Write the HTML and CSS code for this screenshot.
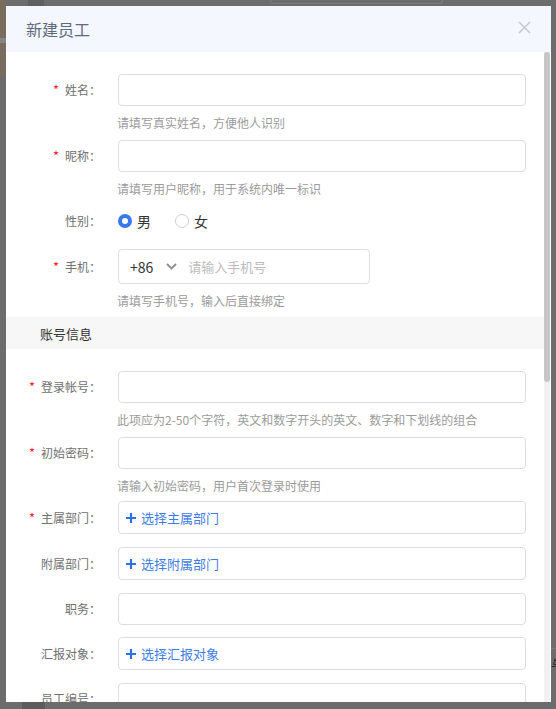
FILE: index.html
```html
<!DOCTYPE html>
<html lang="zh-CN">
<head>
<meta charset="utf-8">
<title>新建员工</title>
<link rel="stylesheet" href="styles.css">
</head>
<body>
<div class="backdrop">
  <div class="bg-strip"></div>
  <div class="bg-block-top"></div>
  <div class="bg-input-top"></div>
  <div class="bg-block-bottom"></div>
  <div class="bg-line-right"></div>
  <div class="bg-char-right">与</div>
</div>

<div class="modal">
  <div class="modal-header">
    <span class="modal-title">新建员工</span>
    <span class="modal-close">
      <svg width="13" height="13" viewBox="0 0 13 13"><path d="M1 1 L12 12 M12 1 L1 12" stroke="#c6c9ce" stroke-width="1.6" fill="none"/></svg>
    </span>
  </div>
  <div class="modal-body">
    <div class="content">
      <div class="item with-help">
        <label class="label"><span class="req">*</span>姓名：</label>
        <div class="ctrl">
          <div class="input"></div>
          <div class="help">请填写真实姓名，方便他人识别</div>
        </div>
      </div>
      <div class="item with-help mb7">
        <label class="label"><span class="req">*</span>昵称：</label>
        <div class="ctrl">
          <div class="input"></div>
          <div class="help">请填写用户昵称，用于系统内唯一标识</div>
        </div>
      </div>
      <div class="item">
        <label class="label">性别：</label>
        <div class="ctrl radio-row">
          <span class="radio"><span class="dot checked"></span>男</span>
          <span class="radio"><span class="dot"></span>女</span>
        </div>
      </div>
      <div class="item with-help mb7">
        <label class="label tall"><span class="req">*</span>手机：</label>
        <div class="ctrl">
          <div class="input phone">
            <span class="code">+86</span>
            <svg class="chev" width="11" height="7" viewBox="0 0 11 7"><path d="M1 1 L5.5 5.5 L10 1" stroke="#8c8c8c" stroke-width="1.8" fill="none"/></svg>
            <span class="placeholder">请输入手机号</span>
          </div>
          <div class="help">请填写手机号，输入后直接绑定</div>
        </div>
      </div>

      <div class="section">账号信息</div>

      <div class="item with-help">
        <label class="label"><span class="req">*</span>登录帐号：</label>
        <div class="ctrl">
          <div class="input"></div>
          <div class="help">此项应为2-50个字符，英文和数字开头的英文、数字和下划线的组合</div>
        </div>
      </div>
      <div class="item with-help mb6">
        <label class="label"><span class="req">*</span>初始密码：</label>
        <div class="ctrl">
          <div class="input"></div>
          <div class="help">请输入初始密码，用户首次登录时使用</div>
        </div>
      </div>
      <div class="item pick-item">
        <label class="label pick-label"><span class="req">*</span>主属部门：</label>
        <div class="ctrl">
          <div class="input picker">
            <svg class="plus" width="10" height="10" viewBox="0 0 10 10"><path d="M5 0 V10 M0 5 H10" stroke="#2f6fe4" stroke-width="2.2" fill="none"/></svg>选择主属部门
          </div>
        </div>
      </div>
      <div class="item pick-item">
        <label class="label pick-label">附属部门：</label>
        <div class="ctrl">
          <div class="input picker">
            <svg class="plus" width="10" height="10" viewBox="0 0 10 10"><path d="M5 0 V10 M0 5 H10" stroke="#2f6fe4" stroke-width="2.2" fill="none"/></svg>选择附属部门
          </div>
        </div>
      </div>
      <div class="item">
        <label class="label">职务：</label>
        <div class="ctrl">
          <div class="input"></div>
        </div>
      </div>
      <div class="item pick-item">
        <label class="label pick-label">汇报对象：</label>
        <div class="ctrl">
          <div class="input picker">
            <svg class="plus" width="10" height="10" viewBox="0 0 10 10"><path d="M5 0 V10 M0 5 H10" stroke="#2f6fe4" stroke-width="2.2" fill="none"/></svg>选择汇报对象
          </div>
        </div>
      </div>
      <div class="item">
        <label class="label">员工编号：</label>
        <div class="ctrl">
          <div class="input"></div>
        </div>
      </div>
      <div class="item">
        <label class="label">入职日期：</label>
        <div class="ctrl">
          <div class="input"></div>
        </div>
      </div>
    </div>
    <div class="scrollbar">
      <div class="track"><div class="thumb"></div></div>
    </div>
  </div>
</div>
</body>
</html>
```

FILE: styles.css
```css
html, body {
  margin: 0;
}
body {
  width: 556px;
  height: 709px;
  box-sizing: border-box;
  padding: 6px 0 0 6px;
  background: #6c6c6c;
  overflow: hidden;
  position: relative;
  font-family: "Noto Sans CJK SC", "Noto Sans", sans-serif;
}

/* dimmed page behind the dialog */
.backdrop {
  position: absolute;
  inset: 0;
  z-index: 0;
}
.bg-strip {
  position: absolute;
  left: 0;
  top: 0;
  width: 6px;
  height: 76px;
  background: #786c5f;
  border-top: 38px solid #7a6c5c;
  box-sizing: border-box;
}
.bg-strip::after {
  content: "";
  position: absolute;
  left: 0;
  top: 0;
  width: 6px;
  height: 5px;
  background: #858585;
}
.bg-block-top {
  position: absolute;
  left: 28px;
  top: 0;
  width: 16px;
  height: 6px;
  background: #5f5f5f;
}
.bg-input-top {
  position: absolute;
  left: 270px;
  top: -4px;
  width: 171px;
  height: 6px;
  border: 1px solid #7e7e7e;
  border-radius: 3px;
}
.bg-block-bottom {
  position: absolute;
  left: 22px;
  top: 702px;
  width: 23px;
  height: 7px;
  background: #5c5c5c;
}
.bg-line-right {
  position: absolute;
  left: 551px;
  top: 648px;
  width: 5px;
  height: 1px;
  background: #7a7a7a;
}
.bg-char-right {
  position: absolute;
  left: 551px;
  top: 656px;
  font-size: 13px;
  line-height: 16px;
  color: #2a2a2a;
}

.modal {
  position: relative;
  z-index: 1;
  width: 545px;
  height: 696px;
  background: #fff;
  display: flex;
  flex-direction: column;
  overflow: hidden;
}
.modal-header {
  flex: none;
  height: 46px;
  background: #f4f7fe;
  display: flex;
  align-items: center;
  justify-content: space-between;
  padding: 0 20px;
}
.modal-title {
  font-size: 16px;
  color: #5f6a7e;
  margin-top: -1px;
}
.modal-close {
  display: flex;
  margin-top: -4px;
}

.modal-body {
  flex: 1;
  min-height: 0;
  display: flex;
}
.content {
  flex: 1;
  min-width: 0;
  overflow: hidden;
  padding-top: 22px;
}
.scrollbar {
  flex: none;
  width: 7px;
  padding-right: 1px;
  box-sizing: border-box;
}
.track {
  height: 100%;
  background: #f1f1f1;
}
.thumb {
  height: 330px;
  background: #c6c6c6;
  border-radius: 3px;
}

.item {
  display: flex;
  margin-bottom: 12px;
  padding-right: 18px;
}
.item.with-help {
  margin-bottom: 8px;
}
.item.mb7 {
  margin-bottom: 7px;
}
.item.mb6 {
  margin-bottom: 6px;
}
.item.pick-item {
  margin-bottom: 13px;
}
.label {
  flex: none;
  width: 95px;
  text-align: right;
  font-size: 12px;
  color: #707070;
  line-height: 32px;
  height: 32px;
  white-space: nowrap;
}
.label.tall {
  line-height: 35px;
  height: 35px;
}
.label.pick-label {
  line-height: 33px;
  height: 33px;
}
.req {
  color: #f5222d;
  font-size: 13px;
  margin-right: 6px;
}
.ctrl {
  flex: 1;
  min-width: 0;
  margin-left: 17px;
}
.input {
  box-sizing: border-box;
  height: 32px;
  border: 1px solid #dcdee2;
  border-radius: 4px;
  background: #fff;
}
.help {
  font-size: 12px;
  line-height: 19px;
  color: #9b9b9b;
  margin-top: 7px;
  margin-left: -1px;
  white-space: nowrap;
}

.radio-row {
  height: 32px;
  display: flex;
  align-items: center;
}
.radio {
  display: flex;
  align-items: center;
  font-size: 14px;
  color: #333;
  margin-right: 24px;
}
.dot {
  width: 14px;
  height: 14px;
  box-sizing: border-box;
  border-radius: 50%;
  border: 1px solid #cfcfcf;
  margin-right: 5px;
  background: #fff;
}
.dot.checked {
  border: 4px solid #3a78f2;
}

.phone {
  width: 252px;
  height: 35px;
  display: flex;
  align-items: center;
  padding-left: 11px;
}
.code {
  font-size: 14px;
  color: #333;
}
.chev {
  margin-left: 13px;
}
.placeholder {
  margin-left: 11px;
  font-size: 13px;
  color: #bdbdbd;
}

.section {
  height: 32px;
  background: #f7f7f7;
  display: flex;
  align-items: center;
  padding-left: 34px;
  font-size: 13px;
  color: #333;
  margin-bottom: 22px;
}

.picker {
  height: 33px;
  display: flex;
  align-items: center;
  padding-left: 7px;
  font-size: 13px;
  color: #3f7ce6;
}
.plus {
  margin-right: 5px;
}
```
